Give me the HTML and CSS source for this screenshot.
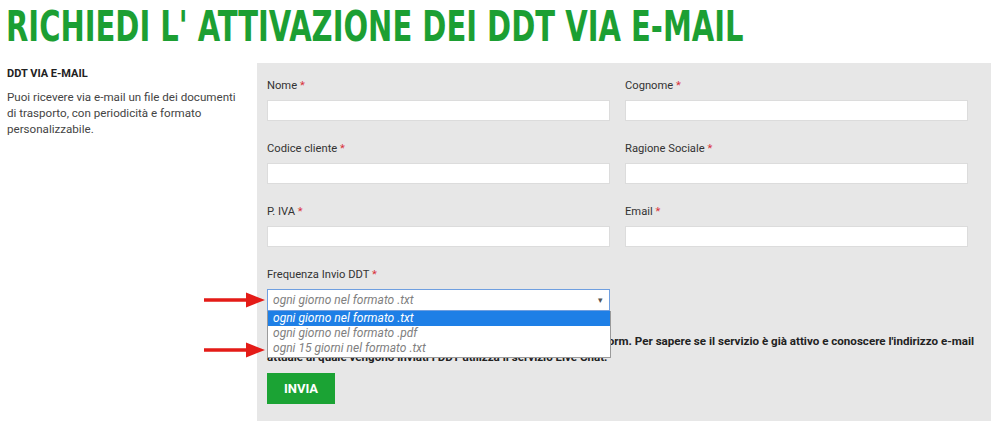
FILE: index.html
```html
<!DOCTYPE html>
<html lang="it">
<head>
<meta charset="utf-8">
<title>Richiedi l'attivazione dei DDT via e-mail</title>
<link rel="stylesheet" href="styles.css">
</head>
<body>
<h1 class="title"><span class="title-text">RICHIEDI L' ATTIVAZIONE DEI DDT VIA E-MAIL</span></h1>
<div class="main">
  <aside class="side">
    <h2 class="side-title">DDT VIA E-MAIL</h2>
    <p class="side-text">Puoi ricevere via e-mail un file dei documenti di trasporto, con periodicità e formato personalizzabile.</p>
  </aside>
  <form class="panel">
    <div class="grid">
      <div class="field">
        <label class="label">Nome <span class="req">*</span></label>
        <div class="input"></div>
      </div>
      <div class="field">
        <label class="label">Cognome <span class="req">*</span></label>
        <div class="input"></div>
      </div>
      <div class="field">
        <label class="label">Codice cliente <span class="req">*</span></label>
        <div class="input"></div>
      </div>
      <div class="field">
        <label class="label">Ragione Sociale <span class="req">*</span></label>
        <div class="input"></div>
      </div>
      <div class="field">
        <label class="label">P. IVA <span class="req">*</span></label>
        <div class="input"></div>
      </div>
      <div class="field">
        <label class="label">Email <span class="req">*</span></label>
        <div class="input"></div>
      </div>
      <div class="field last">
        <label class="label">Frequenza Invio DDT <span class="req">*</span></label>
        <div class="select-wrap">
          <div class="select"><span>ogni giorno nel formato .txt</span><span class="caret">&#9662;</span></div>
          <div class="options">
            <div class="option active">ogni giorno nel formato .txt</div>
            <div class="option">ogni giorno nel formato .pdf</div>
            <div class="option">ogni 15 giorni nel formato .txt</div>
          </div>
          <svg class="arrow arrow-1" width="64" height="20" viewBox="0 0 64 20"><path d="M2 8.3 H44 V2.5 L63 10 L44 17.5 V11.7 H2 Z" fill="#e41b17"/></svg>
          <svg class="arrow arrow-2" width="64" height="20" viewBox="0 0 64 20"><path d="M2 8.3 H44 V2.5 L63 10 L44 17.5 V11.7 H2 Z" fill="#e41b17"/></svg>
        </div>
      </div>
    </div>
    <p class="note">Per attivare il servizio di invio dei DDT via e-mail compila questo form. Per sapere se il servizio è già attivo e conoscere l'indirizzo e-mail<br>attuale al quale vengono inviati i DDT utilizza il servizio Live Chat.</p>
    <button type="button" class="btn">INVIA</button>
  </form>
</div>
</body>
</html>
```

FILE: styles.css
```css
* { box-sizing: border-box; }
html, body { margin: 0; padding: 0; background: #fff; }
body {
  font-family: Roboto, "Liberation Sans", Arial, sans-serif;
  color: #333;
  width: 1000px;
  height: 431px;
  overflow: hidden;
}
.title {
  margin: 0;
  padding: 4px 0 0 6px;
  font-family: "DejaVu Sans Condensed", "DejaVu Sans", sans-serif;
  font-stretch: condensed;
  font-weight: bold;
  font-size: 42px;
  line-height: 46px;
  color: #1c9f33;
  white-space: nowrap;
}
.title-text {
  display: inline-block;
  transform: scaleX(0.768);
  transform-origin: 0 50%;
}
.main {
  display: flex;
  align-items: flex-start;
  margin-top: 13px;
}
.side {
  width: 257px;
  padding: 3px 12px 0 7px;
}
.side-title {
  margin: 0 0 7px;
  font-size: 11px;
  font-weight: bold;
  line-height: 16px;
  color: #222;
}
.side-text {
  margin: 0;
  font-size: 11.6px;
  line-height: 16px;
  color: #444;
}
.panel {
  width: 734px;
  background: #e7e7e7;
  padding: 15px 23px 17px 10px;
  margin: 0;
}
.grid {
  display: grid;
  grid-template-columns: 343px 343px;
  column-gap: 15px;
}
.field { margin-bottom: 20px; }
.field.last { margin-bottom: 22px; }
.label {
  display: block;
  font-size: 11.2px;
  line-height: 16px;
  color: #333;
  margin-bottom: 6px;
}
.req { color: #d9303a; }
.input {
  height: 21px;
  background: #fff;
  border: 1px solid #dcdcdc;
}
.select-wrap { position: relative; }
.select {
  height: 22px;
  background: #fff;
  border: 1px solid #6f9fe0;
  display: flex;
  align-items: center;
  justify-content: space-between;
  padding: 0 6px 0 5px;
  font-size: 12px;
  font-style: italic;
  color: #808080;
}
.caret { font-style: normal; font-size: 9px; color: #555; }
.options {
  position: absolute;
  left: 0;
  top: 22px;
  width: 344px;
  height: 47px;
  background: #fff;
  border: 1px solid #9a9a9a;
  border-top: 0;
  z-index: 2;
}
.option {
  height: 15px;
  line-height: 15px;
  padding-left: 5px;
  font-size: 12px;
  font-style: italic;
  color: #808080;
}
.option.active { background: #1e7fe6; color: #fff; }
.arrow { position: absolute; left: -65px; z-index: 3; }
.arrow-1 { top: 1px; }
.arrow-2 { top: 51px; }
.note {
  margin: 0 0 8px;
  font-size: 11.6px;
  font-weight: bold;
  line-height: 16px;
  color: #222;
  white-space: nowrap;
}
.btn {
  display: block;
  width: 68px;
  height: 31px;
  border: 0;
  background: #1ba334;
  color: #fff;
  font-family: Roboto, "Liberation Sans", sans-serif;
  font-weight: bold;
  font-size: 13px;
  padding: 0;
}
```
